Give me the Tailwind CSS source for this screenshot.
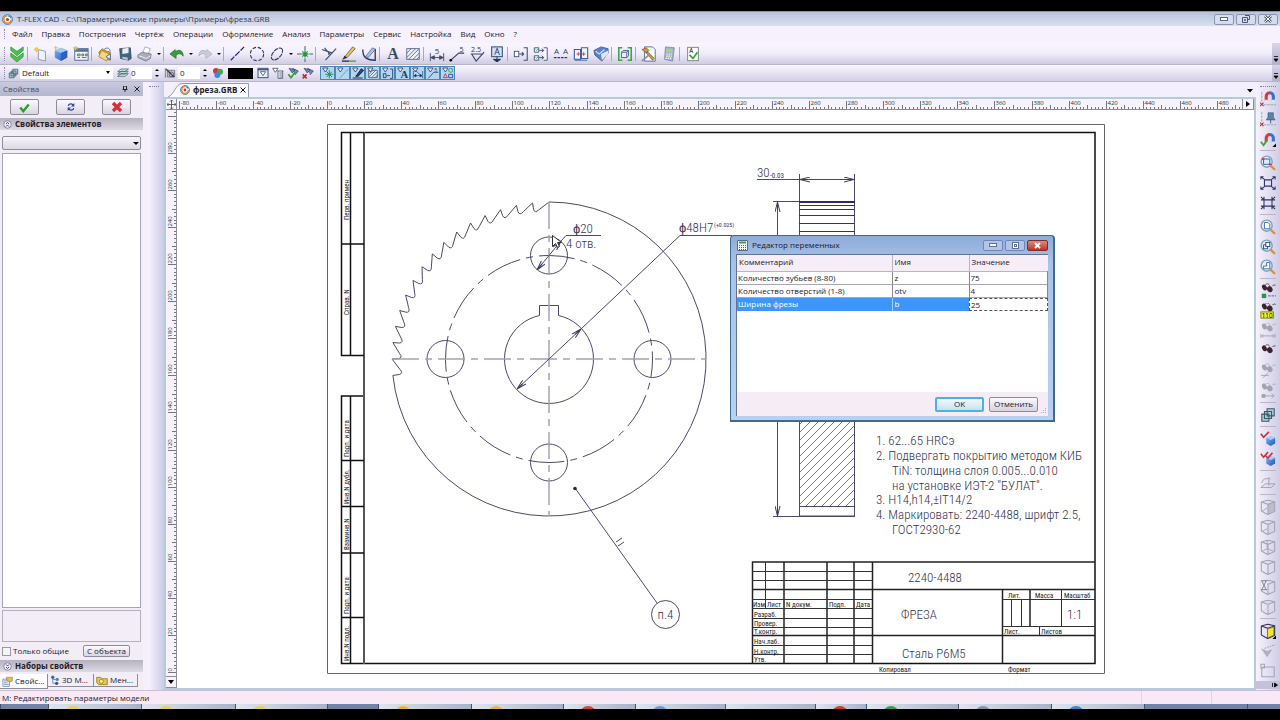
<!DOCTYPE html>
<html lang="ru">
<head>
  <meta charset="UTF-8">
  <meta name="viewport" content="width=device-width, initial-scale=1.0">
  <title>T-FLEX CAD</title>
  <script src="https://cdn.jsdelivr.net/npm/@tailwindcss/browser@4"></script>
</head>
<body class="bg-black h-screen flex flex-col overflow-hidden py-[11px] font-['Open_Sans','Noto_Sans',sans-serif] text-[8px] leading-3 text-[#1d1a2a]">

  <!-- gradients stay in a rendered svg, they do not paint from a hidden one -->
  <svg class="absolute size-0" aria-hidden="true">
    <defs>
      <linearGradient id="gb" x1="0" y1="0" x2="1" y2="1"><stop offset="0" stop-color="#7fb6f5"/><stop offset="1" stop-color="#1c50b8"/></linearGradient>
      <linearGradient id="gm" x1="0" x2="1"><stop offset=".45" stop-color="#d63a3a"/><stop offset=".55" stop-color="#3b6fc4"/></linearGradient>
    </defs>
  </svg>

  <!-- icon set -->
  <svg class="hidden" aria-hidden="true">
    <symbol id="logo" viewBox="0 0 18 18"><circle cx="9" cy="9" r="8" fill="#f4f8ff" stroke="#2f6ea8" stroke-width="1.5"/><path d="M9 3a6 6 0 1 0 6 6" fill="none" stroke="#e8882a" stroke-width="2.5"/><circle cx="9" cy="9" r="2.5" fill="#c43a22"/><path d="M10 3a6 6 0 0 1 5 4" stroke="#2f8fd0" stroke-width="2" fill="none"/></symbol>
    <symbol id="chev" viewBox="0 0 18 18"><path d="M2 1l7 5 7-5v4l-7 6-7-6zM2 8l7 5 7-5v4l-7 6-7-6z" fill="#4cc04c" stroke="#1f8a2a" stroke-width=".7"/></symbol>
    <symbol id="new" viewBox="0 0 18 18"><path d="M6 4l8 2v11l-8-2z" fill="#eef3fb" stroke="#8593ad"/><path d="M4 1v6M1 4h6M2 2l4 4M6 2L2 6" stroke="#f0c93a" stroke-width="1.2"/></symbol>
    <symbol id="cube" viewBox="0 0 18 18"><path d="M2 5l7-3 7 3v8l-7 4-7-4z" fill="url(#gb)"/><path d="M2 5l7 3 7-3-7-3z" fill="#9ccbfa"/><path d="M9 8v9l7-4V5z" fill="#2a5fc6"/><path d="M3 0v5M1 2h5" stroke="#f0c93a" stroke-width="1.3"/></symbol>
    <symbol id="win" viewBox="0 0 18 18"><rect x="2" y="3" width="15" height="13" fill="#f4f6fd" stroke="#4b5f85"/><path d="M2 5h15" stroke="#4b6fa8" stroke-width="3"/><path d="M5 9h3v2H5zM10 9h2v2h-2zM14 9h2v2h-2zM5 13h3M10 13h5" stroke="#506a50" fill="none"/><path d="M3 0v5M0 2h6" stroke="#f0c93a" stroke-width="1.5"/></symbol>
    <symbol id="open" viewBox="0 0 18 18"><path d="M2 7l4-4 3 2 6 2v9L4 13z" fill="#d9a233" stroke="#8d6513" stroke-width=".8"/><path d="M5 5l9 4-3 8-9-5z" fill="#f5d581" stroke="#a9791d" stroke-width=".8"/><path d="M8 4c3-3 6-2 7 2M10 12l5-3v6z" stroke="#3f6c9d" fill="#f2f5fa"/></symbol>
    <symbol id="save" viewBox="0 0 18 18"><path d="M3 3l12-1 1 12-3 2-9-2z" fill="#47647f" stroke="#2b3f55" stroke-width=".8"/><path d="M6 3l7-1v6l-7 1z" fill="#e6eef7"/><path d="M6 12l6 1v3l-6-2z" fill="#b6c7d8"/></symbol>
    <symbol id="print" viewBox="0 0 18 18"><path d="M6 9l3-8 6 2-3 7z" fill="#fff" stroke="#8f95a5" stroke-width=".8"/><path d="M1 10l5-3 10 2-1 5-5 3-9-4z" fill="#a9adb9" stroke="#666c7c" stroke-width=".8"/><path d="M2 11l9 3 4-3" stroke="#f1f3f8" fill="none"/></symbol>
    <symbol id="undo" viewBox="0 0 18 18"><path d="M1 9l7 5v-3.500c3-3 6-2 8 1 0-7-5-8-9-5L7 4z" fill="#3c9b3c" stroke="#1f6b26" stroke-width=".7"/></symbol>
    <symbol id="redo" viewBox="0 0 18 18"><path d="M17 9l-7 5v-3.500c-3-3-6-2-8 1 0-7 5-8 9-5L11 4z" fill="#c9cbd8" stroke="#a7a9ba" stroke-width=".7"/></symbol>
    <symbol id="line" viewBox="0 0 18 18"><path d="M2 16L6 12M7 11l5-5M13 5l4-4" stroke="#27276e" stroke-width="1.400"/></symbol>
    <symbol id="circ" viewBox="0 0 18 18"><circle cx="9" cy="9" r="7.500" fill="none" stroke="#33335e" stroke-width="1.200" stroke-dasharray="4 2"/></symbol>
    <symbol id="ell" viewBox="0 0 18 18"><ellipse cx="9" cy="9" rx="8" ry="4.500" transform="rotate(-48 9 9)" fill="none" stroke="#33335e" stroke-width="1.200" stroke-dasharray="5 1"/></symbol>
    <symbol id="node" viewBox="0 0 18 18"><path d="M9 0v18M0 9h18" stroke="#44446a" stroke-dasharray="5 2"/><path d="M9 5v8M5 9h8M6 6l6 6M12 6l-6 6" stroke="#1e9d33" stroke-width="1.300"/></symbol>
    <symbol id="trim" viewBox="0 0 18 18"><path d="M1 4l12 4M4 2l4 5M5 16L17 3" stroke="#39507c" stroke-width="1.300"/><path d="M8 6l3 3-3 1z" fill="#39507c"/></symbol>
    <symbol id="pen" viewBox="0 0 18 18"><path d="M2 15L13 1l3 2-9 10z" fill="#e7c459" stroke="#4a4a5a" stroke-width=".8"/><path d="M2 15l5-2-3-2z" fill="#222b4a"/><path d="M1 17h8" stroke="#222b4a" stroke-width="1.500"/><path d="M9 17h8" stroke="#3aa847" stroke-width="1.500"/></symbol>
    <symbol id="pen2" viewBox="0 0 18 18"><path d="M2 4c0 8 3 12 14 12V3" fill="none" stroke="#2b3566" stroke-width="1.500"/><path d="M5 12L13 2l3 2-8 9z" fill="#a8c4ea" stroke="#36588e" stroke-width=".8"/></symbol>
    <symbol id="txt" viewBox="0 0 18 18"><text x="9" y="15" font-size="18" text-anchor="middle" font-family="Liberation Serif, serif" font-weight="bold" fill="#3b4a66">A</text></symbol>
    <symbol id="hat" viewBox="0 0 18 18"><rect x="2" y="3" width="14" height="12" fill="#eef2fa" stroke="#56657f"/><path d="M2 8l5-5M2 13l10-10M4 15L16 3M9 15l7-7M13 15l3-3" stroke="#56657f"/></symbol>
    <symbol id="dim" viewBox="0 0 18 18"><path d="M1.500 8v9M16.500 8v9M2 13h14M2 13l4-2v4zM16 13l-4-2v4z" stroke="#3d4a68" fill="#3d4a68"/><text x="9" y="9" font-size="9" text-anchor="middle" fill="#2c3853">5</text></symbol>
    <symbol id="lead" viewBox="0 0 18 18"><path d="M2 16L11 8h6" stroke="#333f5e" fill="none" stroke-width="1.200"/><circle cx="2" cy="16" r="1.500"/><text x="14" y="7" font-size="8" text-anchor="middle" fill="#2c3853">5</text></symbol>
    <symbol id="rough" viewBox="0 0 18 18"><path d="M2 9h14M3 9l5 8 9-10" stroke="#3d4a68" fill="none" stroke-width="1.300"/><text x="8" y="7" font-size="8" text-anchor="middle" fill="#2c3853">2.5</text></symbol>
    <symbol id="scr" viewBox="0 0 18 18"><rect x="3" y="1" width="12" height="11" fill="#cfe3f6" stroke="#35507c" stroke-width="1.200"/><text x="9" y="10" font-size="10" text-anchor="middle" fill="#1f2e54">A</text><path d="M9 12v3M5 15h8l-4 3z" fill="#1f2e54" stroke="#1f2e54"/></symbol>
    <symbol id="frag" viewBox="0 0 18 18"><rect x="1.500" y="6" width="5" height="6" fill="#fff" stroke="#43506e"/><path d="M7 9h5M10 7l2 2-2 2M12 2h4v14h-4" fill="none" stroke="#43506e" stroke-width="1.200"/></symbol>
    <symbol id="frag2" viewBox="0 0 18 18"><path d="M1.500 2h5v5h-5zM1.500 11h5v5h-5zM7 5h5M7 13h5M12 2h4v14h-4" fill="#f6f8fd" stroke="#43506e"/><path d="M3 4l1 1 2-2M3 13l1 1 2-2" stroke="#2d9a3a" fill="none"/><path d="M10 3l2 2-2 2M10 11l2 2-2 2" fill="none" stroke="#27314f"/></symbol>
    <symbol id="aa" viewBox="0 0 18 18"><text x="4" y="9" font-size="9" text-anchor="middle" fill="#33405e">A</text><text x="14" y="9" font-size="9" text-anchor="middle" fill="#33405e">A</text><path d="M1 13h16" stroke="#33405e" stroke-width="1.500" stroke-dasharray="3 1"/></symbol>
    <symbol id="link" viewBox="0 0 18 18"><path d="M1.500 4h7v11h-7zM9.500 2h7v12h-7z" fill="#eef4fd" stroke="#3c5f9c" stroke-width="1.200"/><path d="M4 9h10M6 7v4M12 7v4" stroke="#c23a4a"/><path d="M2 16h14" stroke="#3c5f9c"/></symbol>
    <symbol id="lib" viewBox="0 0 18 18"><path d="M1 5l8-4 8 2v5l-7 9-8-7z" fill="#5b82c4" stroke="#2d4a86" stroke-width=".8"/><path d="M9 9l8-4v4l-7 7z" fill="#dfe5f0"/><path d="M3 6l4 3 6-5" stroke="#c9dcf6" fill="none" stroke-width="1.500"/></symbol>
    <symbol id="brk" viewBox="0 0 18 18"><path d="M6 2H2v14h4M12 2h4v14h-4" fill="none" stroke="#39a846" stroke-width="1.800"/><path d="M5 7l2-2h6v6l-2 2H5zM5 7h6v6M11 7l2-2" fill="#e7edf7" stroke="#46587c"/></symbol>
    <symbol id="ham" viewBox="0 0 18 18"><path d="M4 1h9l3 3v13H4z" fill="#fafbff" stroke="#53648a"/><path d="M1 4l5-2 3 3-3 3zM7 6l8 8-2 2-7-8z" fill="#c89a3f" stroke="#6b5120" stroke-width=".7"/><path d="M1 17l8-7" stroke="#8893a8" stroke-width="2"/></symbol>
    <symbol id="calc" viewBox="0 0 18 18"><path d="M5 1l10 1-2 15-9-2z" fill="#a3b5c9" stroke="#6d7f97" stroke-width=".8"/><path d="M6 3l7 1v3l-7-1z" fill="#9edb6f"/><path d="M6 9h7M6 11.500h6M5 14h7" stroke="#f6f8fc" stroke-width="1.400" stroke-dasharray="1.500 1"/></symbol>
    <symbol id="spell" viewBox="0 0 18 18"><rect x="3" y="1.500" width="12" height="15" fill="#fff" stroke="#6e7f78"/><path d="M5 10l4 4 5-7" stroke="#3da33d" stroke-width="2" fill="none"/><text x="7" y="8" font-size="7" text-anchor="middle">A</text></symbol>
    <symbol id="stack" viewBox="0 0 18 18"><path d="M8 2h8v8H8zM5 5h8v8H5zM2 8h8v8H2z" fill="#a9cbd4" stroke="#39596a" stroke-width="1.200"/></symbol>
    <symbol id="lay" viewBox="0 0 18 18"><path d="M1 14h11l5-4H6zM1 10.500h11l5-4H6zM1 7h11l5-4H6z" fill="#cfe6ea" stroke="#2f5560"/></symbol>
    <symbol id="prio" viewBox="0 0 18 18"><path d="M2 2v14M5 5h11v10H5z" stroke="#4a4f66" fill="#c9cede"/><path d="M3 3l12 12" stroke="#5a3a2a" stroke-width="2"/><circle cx="11" cy="11" r="3.500" fill="none" stroke="#2b3050"/></symbol>
    <symbol id="rgb" viewBox="0 0 18 18"><circle cx="6" cy="6" r="4.500" fill="#d8362e"/><circle cx="12" cy="7" r="4.500" fill="#3fae49"/><circle cx="8" cy="12" r="4.500" fill="#3f86d8"/></symbol>
    <symbol id="flt" viewBox="0 0 18 18"><rect x="1.500" y="2" width="15" height="14" fill="#e8eefb" stroke="#3f5280" stroke-width="1.500"/><path d="M1 4h16" stroke="#3f5280" stroke-width="2"/><path d="M5 7h8l-4 6z" fill="#fff" stroke="#3f4a66" stroke-width="1.200"/></symbol>
    <symbol id="flt2" viewBox="0 0 18 18"><path d="M1 2h8L5 8zM8 6h9M9 6v11h7V6M11 9h4M11 12h4M11 15h4" fill="#fff" stroke="#3f4a66" stroke-width="1.200"/></symbol>
    <symbol id="fok" viewBox="0 0 18 18"><path d="M3 2l9 2-4 5zM8 2l9 4-5 6" fill="#6d86b4" stroke="#2f406a"/><path d="M2 11l4 5 6-8" stroke="#2d9c37" stroke-width="2.500" fill="none"/></symbol>
    <symbol id="fno" viewBox="0 0 18 18"><path d="M3 2l9 2-4 5zM8 2l9 4-5 6" fill="#6d86b4" stroke="#2f406a"/><path d="M1 11l6 6M7 11l-6 6" stroke="#c92626" stroke-width="2.500"/></symbol>
    <symbol id="fun" viewBox="0 0 18 18"><path d="M1 1.500h8l-4 6z" fill="#eef6ff" stroke="#27375f" stroke-width="1.200"/></symbol>
    <symbol id="t0" viewBox="0 0 18 18"><use href="#fun"/><path d="M11 5v12M5 11h12M7 7l8 8M15 7l-8 8" stroke="#23963a" stroke-width="1.500"/></symbol>
    <symbol id="t1" viewBox="0 0 18 18"><use href="#fun"/><path d="M4 17L17 3" stroke="#6480b0"/></symbol>
    <symbol id="t2" viewBox="0 0 18 18"><use href="#fun"/><path d="M6 14L14 3l3 2-8 9zM1 16.500h15" stroke="#1c2a52" stroke-width="1.600" fill="#41527e"/></symbol>
    <symbol id="t3" viewBox="0 0 18 18"><path d="M2.500 5h13v11h-13zM3 11l6-6M3 15l10-10M7 16l8-8M12 16l4-4" fill="#dcebf8" stroke="#2f4068"/><use href="#fun"/></symbol>
    <symbol id="t4" viewBox="0 0 18 18"><use href="#fun"/><path d="M2 10h4v6H2zM7 13h5M12 3h4v14h-4" fill="none" stroke="#27375f" stroke-width="1.300"/></symbol>
    <symbol id="t5" viewBox="0 0 18 18"><use href="#fun"/><text x="11" y="17" font-size="16" text-anchor="middle" font-family="Liberation Serif, serif" font-weight="bold" fill="#27375f">A</text></symbol>
    <symbol id="t6" viewBox="0 0 18 18"><use href="#fun"/><path d="M2 6v11M16 6v11M3 13h12M5 5l9 8M3 13l3-2v4zM15 13l-3-2v4z" stroke="#27375f" fill="#27375f"/></symbol>
    <symbol id="t7" viewBox="0 0 18 18"><use href="#fun"/><path d="M2 17l8-9h7" stroke="#27375f" fill="none" stroke-width="1.200"/><text x="13" y="8" font-size="8" text-anchor="middle" fill="#27375f">5</text></symbol>
    <symbol id="t8" viewBox="0 0 18 18"><use href="#fun"/><path d="M2 16l3-6 3 6z" fill="none" stroke="#c8323c" stroke-width="1.300"/><circle cx="13" cy="5" r="3" fill="none" stroke="#2a9a49" stroke-width="1.300"/><path d="M10 11h6v5h-6z" fill="none" stroke="#2445a8" stroke-width="1.300"/></symbol>
    <symbol id="mag" viewBox="0 0 18 18"><path d="M6 13V8a4 4 0 0 1 8 0v5" fill="none" stroke="url(#gm)" stroke-width="3.500"/><path d="M4.300 13h3.500M12.300 13h3.500" stroke="#dfe3ee" stroke-width="2.500"/></symbol>
    <symbol id="r0" viewBox="0 0 18 18"><path d="M2 1v12M4 15.500h14" stroke="#9a9cab" stroke-dasharray="3 1"/><use href="#mag" x="1" y="-2" width="18" height="18"/><path d="M0 13l4 4M4 13l-4 4" stroke="#c92b2b" stroke-width="1.200"/></symbol>
    <symbol id="r1" viewBox="0 0 18 18"><path d="M2 1v12M4 15.500h14" stroke="#9a9cab" stroke-dasharray="3 1"/><path d="M9 2h6v5l2 3H7l2-3z" fill="#5c83a8" stroke="#35587a" stroke-width=".7"/><path d="M12 10v4" stroke="#44546a"/><path d="M0 13l4 4M4 13l-4 4" stroke="#c92b2b" stroke-width="1.200"/></symbol>
    <symbol id="r2" viewBox="0 0 18 18"><use href="#mag" x="1" y="0" width="18" height="18"/><path d="M1 12l3 4 4-6" stroke="#3aa63a" stroke-width="2" fill="none"/><path d="M18 14v4h-4z"/></symbol>
    <symbol id="glass" viewBox="0 0 18 18"><path d="M11 11l5 5" stroke="#d9924c" stroke-width="2.800" stroke-linecap="round"/><circle cx="7.500" cy="7.500" r="6.200" fill="#dcecf9" stroke="#7d9fc4" stroke-width="1.600"/></symbol>
    <symbol id="z0" viewBox="0 0 18 18"><use href="#glass"/><path d="M4 4.500h7v6H4z" fill="none" stroke="#35558c"/><path d="M2 4.500h3M10 10.500h3" stroke="#c9303a" stroke-width="1.500"/></symbol>
    <symbol id="z1" viewBox="0 0 18 18"><path d="M5 5.500h8v7H5zM1 2l4 3M17 2l-4 3M1 16l4-3M17 16l-4-3M1 5V2h3M14 2h3v3M1 13v3h3M14 16h3v-3" fill="none" stroke="#2f3566" stroke-width="1.200"/></symbol>
    <symbol id="z2" viewBox="0 0 18 18"><path d="M1 5.500h16M1 12.500h16M4.500 2v14M13.500 2v14M1 2l3 3M17 2l-3 3M1 16l3-3M17 16l-3-3" fill="none" stroke="#2f3566" stroke-width="1.200"/></symbol>
    <symbol id="z3" viewBox="0 0 18 18"><use href="#glass"/><path d="M5 4h4l2 2v5H5z" fill="#fff" stroke="#3d6a92"/></symbol>
    <symbol id="z4" viewBox="0 0 18 18"><use href="#glass"/><path d="M6.500 4h4.500v4.500H6.500zM4 6.500h2.500M4 6.500v4.500h4.500V9" fill="#fff" stroke="#3d5a82" stroke-width="1.200"/></symbol>
    <symbol id="z5" viewBox="0 0 18 18"><use href="#glass"/><path d="M7.500 4v4H4v3h7V4z" fill="#fff" stroke="#3d6a92"/></symbol>
    <symbol id="eye" viewBox="0 0 18 18"><ellipse cx="5" cy="6" rx="2.500" ry="3.500" transform="rotate(-30 5 6)" fill="currentColor"/><ellipse cx="11" cy="8" rx="3" ry="3.500" transform="rotate(-30 11 8)" fill="currentColor"/><path d="M6 3c2-2 4-1 5 1M14 4l3-1 1 1" stroke="currentColor" fill="none" stroke-width=".8"/></symbol>
    <symbol id="e0" viewBox="0 0 18 18"><use href="#eye" y="-1"/><rect x="2" y="12" width="5" height="5" fill="#2b9440"/><path d="M9 14.500h9" stroke="#4b5a80" stroke-dasharray="3 1"/></symbol>
    <symbol id="e1" viewBox="0 0 18 18"><use href="#eye" y="-2"/><rect x="1" y="10" width="14" height="7" fill="#f5f032" stroke="#77741c"/><text x="8" y="16.500" font-size="7" text-anchor="middle">110</text></symbol>
    <symbol id="e2" viewBox="0 0 18 18"><use href="#eye" y="-2"/><path d="M1 12v5M17 12v5M2 14.500h14M4 13l-2 1.500 2 1.500M14 13l2 1.500-2 1.500" stroke="currentColor" fill="none"/></symbol>
    <symbol id="e4" viewBox="0 0 18 18"><use href="#eye" y="-1"/><path d="M1 14h9M3 17l6-6" stroke="currentColor"/></symbol>
    <symbol id="e5" viewBox="0 0 18 18"><use href="#eye" y="-2"/><circle cx="4" cy="14.500" r="2.500" fill="currentColor"/><path d="M5 14.500h11M13 12l3 2.500-3 2.500" stroke="currentColor" fill="none"/></symbol>
    <symbol id="bx" viewBox="0 0 18 18"><path d="M7 8l5-2 5 2v6l-5 3-5-3z" fill="url(#gb)"/><path d="M7 8l5 2 5-2-5-2z" fill="#a5cdfb"/></symbol>
    <symbol id="c0" viewBox="0 0 18 18"><use href="#bx"/><path d="M1 3l3 4 6-6" stroke="#cf2f3a" stroke-width="1.800" fill="none"/></symbol>
    <symbol id="c1" viewBox="0 0 18 18"><use href="#bx"/><path d="M1 3l3 4 5-6M6 5l3 3 5-6" stroke="#cf2f3a" stroke-width="1.800" fill="none"/></symbol>
    <symbol id="pl" viewBox="0 0 18 18"><path d="M1 14l5-4h11l-4 4zM10 3v9M8 5l2-2 2 2M2 9c1-4 3-5 6-5" fill="none" stroke="#9b9cab"/></symbol>
    <symbol id="wire" viewBox="0 0 18 18"><path d="M1.500 3.500l7-2 8 1.500v11l-8 3.500-7-4zM1.500 3.500L9 6l7.500-3M9 6v11.500" fill="none" stroke="currentColor" stroke-width="1.200"/></symbol>
    <symbol id="w0" viewBox="0 0 18 18"><path d="M9 6l7.500-3v11L9 17.500z" fill="#bcbdcb"/><use href="#wire"/><path d="M2 14l6-4" stroke="currentColor"/></symbol>
    <symbol id="w1" viewBox="0 0 18 18"><path d="M9 6l7.500-3v11L9 17.500z" fill="#d5d6e2"/><use href="#wire"/><path d="M2 14l6-3" stroke="currentColor"/></symbol>
    <symbol id="w2" viewBox="0 0 18 18"><use href="#wire"/><path d="M8 2v9L2 14M8 11l8 3" stroke="currentColor" fill="none"/></symbol>
    <symbol id="w4" viewBox="0 0 18 18"><use href="#wire"/><path d="M1 2h7v10H1z" fill="#ece9f8"/><path d="M1 2h7M1 12h7M2 2l5 10M7 2L2 12" stroke="#77788a"/></symbol>
    <symbol id="w5" viewBox="0 0 18 18"><use href="#wire"/><path d="M8 2v9L2 14M8 11l8 3" stroke="#cfd0dc" fill="none"/></symbol>
    <symbol id="wy" viewBox="0 0 18 18"><use href="#wire"/><path d="M8.500 6.500l7-2v9l-7 3.500z" fill="#f6e52a" stroke="#4a4710" stroke-width=".6"/><path d="M18 14v4h-4z"/></symbol>
    <symbol id="tri" viewBox="0 0 18 18"><path d="M1 6l7 10 6-9-6 2z" fill="#aeb0bf"/><path d="M5 6l12-4" stroke="#9b9cab" stroke-dasharray="2 1"/></symbol>
    <symbol id="pg" viewBox="0 0 18 18"><path d="M3 4.500h13v11H2V6M1 1.500h4v4H1z" fill="none" stroke="#a3a4b6" stroke-width="1.200"/></symbol>
    <symbol id="ok" viewBox="0 0 18 18"><path d="M2 9l5 6 9-11" stroke="#2f9e2f" stroke-width="4" fill="none"/></symbol>
    <symbol id="rf" viewBox="0 0 18 18"><path d="M4 7c1-4 7-5 9-1M14 11c-1 4-7 5-9 1" stroke="#2b3fa8" stroke-width="2.200" fill="none"/><path d="M15 2v6H9zM3 16v-6h6z" fill="#2b3fa8"/></symbol>
    <symbol id="no" viewBox="0 0 18 18"><path d="M3 3l12 12M15 3L3 15" stroke="#d6303a" stroke-width="5"/></symbol>
    <symbol id="dbl" viewBox="0 0 18 18"><circle cx="9" cy="9" r="7.500" fill="#eeedf8" stroke="#6f6f90" stroke-width="1.500"/><path d="M6 8l3-3 3 3M6 13l3-3 3 3" fill="none" stroke="#2f3070" stroke-width="1.800"/></symbol>
    <symbol id="tab1" viewBox="0 0 18 18"><rect x="1.500" y="5" width="11" height="12" fill="#eef3fb" stroke="#4d6ea0"/><path d="M3 8h8M3 11h6M3 14h8" stroke="#4d6ea0"/><path d="M7 2h10v6l-5 2-4-3z" fill="#e0b85a" stroke="#8d6c1f" stroke-width=".8"/></symbol>
    <symbol id="tab2" viewBox="0 0 18 18"><path d="M5 4v11h6M5 8h6" stroke="#3a4a70" fill="none"/><circle cx="5" cy="4" r="3" fill="#3f6c9c"/><circle cx="13" cy="8" r="3" fill="#4f86ba"/><circle cx="12" cy="15" r="3" fill="#31567f"/></symbol>
    <symbol id="tab3" viewBox="0 0 18 18"><path d="M1 5h6l2 2h8v9H4L1 13z" fill="#e6c547" stroke="#836a15"/><circle cx="8" cy="11" r="3" fill="#f6ecb0" stroke="#836a15"/></symbol>
  </svg>

  <!-- title bar -->
  <header class="h-[15px] shrink-0 flex items-center gap-1 px-0.5 bg-linear-to-b from-[#b7c3dc] to-[#dadff0] border-t border-[#8b93a8]">
    <svg class="size-[11px]"><use href="#logo"/></svg>
    <h1 class="flex-1 text-[#2f3a50]">T-FLEX CAD - C:\Параметрические примеры\Примеры\фреза.GRB</h1>
    <div class="flex gap-0.5">
      <button aria-label="Свернуть" class="w-5 h-[11px] grid place-items-center border border-[#8a95b3] rounded-xs bg-[#d5dcee]"><span class="w-2 h-1 border border-[#5b6682] bg-white"></span></button>
      <button aria-label="Восстановить" class="w-5 h-[11px] grid place-items-center border border-[#8a95b3] rounded-xs bg-[#d5dcee]"><svg class="size-2" viewBox="0 0 8 8"><path d="M3 .5h4.500v4H5.500M.5 2.500h5v5h-5z M2.500 4.500h1v1h-1z" fill="none" stroke="#4c5672"/></svg></button>
      <button aria-label="Закрыть" class="w-5 h-[11px] grid place-items-center border border-[#8a95b3] rounded-xs bg-[#d5dcee]"><svg class="size-2" viewBox="0 0 8 8"><path d="M1 1l6 6M7 1L1 7" stroke="#4c5672" stroke-width="2.500"/><path d="M1 1l6 6M7 1L1 7" stroke="#fff"/></svg></button>
    </div>
  </header>

  <!-- menu -->
  <nav class="h-[17px] shrink-0 flex items-center gap-[9px] pl-1 pb-px bg-[#f7f1fd]">
    <span class="h-2.5 border-l border-dotted border-[#8c8ba5]"></span>
    <a href="#" class="-ml-0.5">Файл</a><a href="#">Правка</a><a href="#">Построения</a><a href="#">Чертёж</a><a href="#">Операции</a><a href="#">Оформление</a><a href="#">Анализ</a><a href="#">Параметры</a><a href="#">Сервис</a><a href="#">Настройка</a><a href="#">Вид</a><a href="#">Окно</a><a href="#">?</a>
  </nav>

  <!-- main toolbar -->
  <div class="h-[22px] shrink-0 flex bg-linear-to-b from-[#faf6ff] via-[#f0ecfa] to-[#d0cce2] border-b border-[#b9b5cd]">
    <div class="flex-1 flex items-center pl-1">
      <span class="h-3.5 w-[3px] border-l border-dotted border-[#8c8ba5]"></span>
      <div id="main-bar" class="flex items-center"></div>
    </div>
    <button aria-label="Ещё" class="w-2 flex items-end justify-center pb-0.5 bg-linear-to-b from-[#d8d4ea] to-[#b5b1cc]"><svg class="w-1.5 h-1.5" viewBox="0 0 6 6"><path d="M1 .5h4M1 3h4L3 5.500z" stroke="#000" stroke-width=".8"/></svg></button>
  </div>

  <!-- properties toolbar -->
  <div class="h-[17px] shrink-0 flex bg-linear-to-b from-[#faf6ff] to-[#d4d0e6] border-b border-[#b9b5cd]">
    <div class="flex-1 flex items-center pl-1">
      <span class="h-3 w-[3px] border-l border-dotted border-[#8c8ba5]"></span>
      <svg class="size-[11px] mx-px"><use href="#stack"/></svg>
      <div class="relative h-3 w-[93px]">
        <select aria-label="Слой" class="appearance-none w-full h-3 pl-0.5 bg-white leading-3"><option>Default</option></select>
        <svg class="absolute right-0.5 top-1 w-1.5 h-1 pointer-events-none" viewBox="0 0 6 4"><path d="M1 0h4L3 3z"/></svg>
      </div>
      <svg class="size-3 ml-1 mr-0.5"><use href="#lay"/></svg>
      <input aria-label="Уровень" value="0" class="w-[21px] h-3 bg-white">
      <svg class="w-1.5 h-3 mx-0.5" viewBox="0 0 6 12"><path d="M1 4h4L3 2zM1 8h4l-2 2z"/></svg>
      <svg class="size-3 mx-0.5"><use href="#prio"/></svg>
      <input aria-label="Приоритет" value="0" class="w-[22px] h-3 bg-white pl-0.5">
      <svg class="w-1.5 h-3 ml-0.5 mr-1" viewBox="0 0 6 12"><path d="M1 4h4L3 2zM1 8h4l-2 2z"/></svg>
      <svg class="size-3 mr-1"><use href="#rgb"/></svg>
      <button aria-label="Цвет" class="w-[25px] h-[11px] bg-black"></button>
      <div id="filter-bar" class="flex items-center gap-[3px] pl-1 pr-1.5"></div>
      <div id="toggle-bar" class="flex"></div>
    </div>
    <button aria-label="Ещё" class="w-2 flex items-end justify-center pb-0.5 bg-linear-to-b from-[#d8d4ea] to-[#b5b1cc]"><svg class="w-1.5 h-1.5" viewBox="0 0 6 6"><path d="M1 .5h4M1 3h4L3 5.500z" stroke="#000" stroke-width=".8"/></svg></button>
  </div>

  <div class="flex-1 min-h-0 flex bg-[#f4effc]">

    <!-- properties panel -->
    <aside class="w-[143px] shrink-0 flex flex-col bg-[#f3edf7] pb-px">
      <div class="h-3.5 flex items-center px-[3px] bg-linear-to-b from-[#c9c9de] to-[#b4b5d0] text-[#4c4f68]">
        <h2 class="flex-1">Свойства</h2>
        <button aria-label="Закрепить" class="mr-1.5"><svg class="size-1.5" viewBox="0 0 6 6"><path d="M1.500 0h3v3.500h-3zM.5 3.500h5M3 3.500V6" fill="none" stroke="#222"/></svg></button>
        <button aria-label="Закрыть панель"><svg class="size-1.5" viewBox="0 0 6 6"><path d="M.5.5l5 5M5.500.5l-5 5" stroke="#222"/></svg></button>
      </div>
      <div class="flex gap-[17px] pl-2.5 py-[3px]">
        <button aria-label="Применить" class="w-[29px] h-4 grid place-items-center border border-[#8d8a9c] rounded-xs bg-linear-to-b from-[#fbf9fe] to-[#d9d6e3]"><svg class="size-[11px]"><use href="#ok"/></svg></button>
        <button aria-label="Обновить" class="w-[29px] h-4 grid place-items-center border border-[#8d8a9c] rounded-xs bg-linear-to-b from-[#fbf9fe] to-[#d9d6e3]"><svg class="size-[10px]"><use href="#rf"/></svg></button>
        <button aria-label="Отменить ввод" class="w-[29px] h-4 grid place-items-center border border-[#8d8a9c] rounded-xs bg-linear-to-b from-[#fbf9fe] to-[#d9d6e3]"><svg class="size-3"><use href="#no"/></svg></button>
      </div>
      <h3 class="h-3 flex items-center gap-[3px] pl-[3px] font-bold bg-linear-to-b from-[#b5b2bd] to-[#dedae5]"><svg class="size-[9px]"><use href="#dbl"/></svg>Свойства элементов</h3>
      <div class="relative mx-0.5 mt-1.5">
        <select aria-label="Элемент" class="appearance-none block w-full h-[14px] border border-[#8e8b9b] rounded-xs bg-linear-to-b from-[#f8f5fb] to-[#dcd8e4]"><option></option></select>
        <svg class="absolute right-0.5 top-[6px] w-1.5 h-1 pointer-events-none" viewBox="0 0 6 4"><path d="M0 0h6L3 3z"/></svg>
      </div>
      <div class="flex-1 mx-0.5 mt-[3px] bg-white border border-[#a7a5b3]"></div>
      <div class="h-8 mx-0.5 mt-0.5 border border-[#b3b0bf]"></div>
      <div class="flex items-center h-4 px-0.5 mt-px">
        <input type="checkbox" id="common" class="appearance-none size-[9px] border border-[#9a98a8] bg-[#f6f3fa]">
        <label for="common" class="ml-0.5 w-[70px] whitespace-nowrap">Только общие</label>
        <button class="w-[47px] h-3 leading-2 border border-[#8d8a9c] rounded-xs bg-linear-to-b from-[#fbf9fe] to-[#d9d6e3]">С объекта</button>
      </div>
      <h3 class="mt-px h-3 flex items-center gap-[3px] pl-[3px] font-bold bg-linear-to-b from-[#b5b2bd] to-[#dedae5]"><svg class="size-[9px] rotate-180"><use href="#dbl"/></svg>Наборы свойств</h3>
      <div class="flex h-[15px] mt-0.5">
        <button class="w-12 flex items-center gap-0.5 pl-0.5 bg-white border-r border-b border-[#8e8b9b] whitespace-nowrap"><svg class="size-[11px]"><use href="#tab1"/></svg>Свойс...</button>
        <button class="w-[46px] h-[13px] flex items-center gap-0.5 pl-0.5 border-r border-b border-[#8e8b9b] whitespace-nowrap"><svg class="size-[10px]"><use href="#tab2"/></svg>3D М...</button>
        <button class="w-11 h-[13px] flex items-center gap-0.5 pl-0.5 border-r border-b border-[#8e8b9b] whitespace-nowrap"><svg class="size-3"><use href="#tab3"/></svg>Мен...</button>
      </div>
    </aside>

    <!-- docked side strip -->
    <div class="w-[21px] shrink-0 pl-1.5 bg-linear-to-r from-[#f6f0fc] from-30% to-[#c9cbe6]"><div class="mt-1 w-2.5 border-t border-dotted border-[#7f7d99]"></div></div>

    <!-- document -->
    <main class="relative flex-1 min-w-0 flex flex-col">
      <div class="h-[15px] flex items-end pl-1 pr-[3px]">
        <div class="relative h-3.5 w-[82px]">
          <svg class="absolute inset-0 w-full h-full" viewBox="0 0 82 14"><path d="M0 14C6 12 8 .5 14 .5h66.500V14" fill="#fdfbff" stroke="#8c9cb8"/></svg>
          <div class="relative flex items-center h-full pl-3 gap-[3px]">
            <svg class="size-[10px]"><use href="#logo"/></svg><span class="font-bold">фреза.GRB</span>
            <button aria-label="Закрыть вкладку"><svg class="size-1.5" viewBox="0 0 6 6"><path d="M.5.5l5 5M5.500.5l-5 5" stroke="#111"/></svg></button>
          </div>
        </div>
        <svg class="ml-auto mb-1 w-1.5 h-1" viewBox="0 0 6 4"><path d="M0 0h6L3 3.500z"/></svg>
      </div>
      <div class="flex-1 min-h-0 flex flex-col border-2 border-[#b4cbdc] bg-white">
        <div class="h-[11px] shrink-0 flex bg-[#f6f3fa] border-b border-[#8d8b98]">
          <div class="w-[11px] grid place-items-center border-r border-[#8d8b98]"><svg class="size-[9px]" viewBox="0 0 9 9"><path d="M4.500 0v9M0 4.500h9M3 1.500L4.500 0 6 1.500M3 7.500L4.500 9 6 7.500M1.500 3L0 4.500 1.500 6M7.500 3L9 4.500 7.500 6" fill="none" stroke="#444" stroke-width=".8"/></svg></div>
          <svg id="h-ruler" class="flex-1 h-2.5"></svg>
          <button aria-label="Вправо" class="w-3 grid place-items-center border-x border-[#8d8b98]"><svg class="w-1 h-1.5" viewBox="0 0 4 6"><path d="M0 0v6l4-3z"/></svg></button>
        </div>
        <div class="flex-1 min-h-0 flex">
          <div class="w-[11px] shrink-0 flex flex-col bg-[#f6f3fa] border-r border-[#8d8b98]">
            <svg id="v-ruler" class="w-2.5 flex-1"></svg>
            <button aria-label="Вниз" class="h-3 grid place-items-center border-y border-[#8d8b98]"><svg class="w-1.5 h-1" viewBox="0 0 6 4"><path d="M0 0h6L3 4z"/></svg></button>
          </div>

          <svg class="flex-1 font-['Roboto_Condensed',Roboto,sans-serif]" role="img" aria-label="Чертёж фрезы">
            <defs>
              <pattern id="hatch" width="8" height="8" patternUnits="userSpaceOnUse"><path d="M-1 9L9-1M-1 1L1-1M7 9l2-2" stroke="#55557a" stroke-width=".8"/></pattern>
              <marker id="arr" viewBox="0 0 10 6" refX="10" refY="3" markerWidth="10" markerHeight="6" orient="auto-start-reverse" markerUnits="userSpaceOnUse"><path d="M0 .5L10 3 0 5.500M2 3h8" fill="none" stroke="#3a3a66"/></marker>
            </defs>
            <g transform="translate(-177 -110)" fill="none">
              <!-- sheet and frame -->
              <path d="M327.500 124.500h777v549h-777z" stroke="#666"/>
              <path d="M364 132.500h731v531H341.500V396H364" stroke="#111" stroke-width="1.500"/>
              <path d="M364 132v532" stroke="#555" stroke-width="2"/>
              <path d="M364 132.500h-22.500V355.500H364M350.500 132v223M341 244h23M350.500 396v267M341 460.500h23M341 506.500h23M341 553h23M341 617.500h23" stroke="#111" stroke-width="1.500"/>
              <g fill="#222" font-size="7">
                <text transform="translate(349 220) rotate(-90)">Перв. примен</text>
                <text transform="translate(349 315) rotate(-90)">Справ. N</text>
                <text transform="translate(349 457) rotate(-90)">Подп. и дата</text>
                <text transform="translate(349 504) rotate(-90)">Инв.N дубл.</text>
                <text transform="translate(349 550) rotate(-90)">Взаминв.N</text>
                <text transform="translate(349 614) rotate(-90)">Подп. и дата</text>
                <text transform="translate(349 661) rotate(-90)">Инв.N подл.</text>
              </g>

              <!-- cutter, front view -->
              <g stroke="#4a4a66">
                <path id="teeth"/>
                <circle cx="549" cy="359" r="103.500" stroke-dasharray="36 6 7 6" stroke-dashoffset="18"/>
                <circle cx="549" cy="255.500" r="18.500"/><circle cx="549" cy="462.500" r="18.500"/>
                <circle cx="445.500" cy="359" r="18.500"/><circle cx="652.500" cy="359" r="18.500"/>
                <path d="M539.500 315.500A44.500 44.500 0 1 0 558.500 315.500V305.500h-19z"/>
              </g>
              <path d="M549 202v314" stroke="#a3a2b5" stroke-width="1.500" stroke-dasharray="27 6 7 6"/>
              <path d="M392 359h314" stroke="#a3a2b5" stroke-width="1.500" stroke-dasharray="27 6 7 6"/>
              <g stroke="#4a4a6c">
                <path d="M537 270l24-29" marker-start="url(#arr)" marker-end="url(#arr)"/><path d="M561 241l5-5.500h35"/>
                <path d="M517 389l64-60" marker-start="url(#arr)" marker-end="url(#arr)"/><path d="M581 329l99-93.500h52"/>
                <path d="M575 488l82 115M616 542l6-4M618 546l6-4"/>
                <circle cx="665.500" cy="614.500" r="14"/>
              </g>
              <circle cx="575" cy="488.500" r="1.800" fill="#26264f"/>

              <!-- cutter, side view -->
              <g stroke="#4a4a6c">
                <path d="M799.500 174v342h55V174M773 516.500h82"/>
                <path d="M773 201.500h27"/><path d="M799 202h56" stroke="#2c2c6a" stroke-width="2"/>
                <path d="M799 205.500h56M799 209.500h56M799 215.500h56M799 223.500h56M799 231.500h56" stroke="#34346c"/>
                <path d="M799.500 400h55v106.500h-55z" fill="url(#hatch)"/>
                <path d="M757 179.500h43"/><path d="M800 179.500h54" marker-start="url(#arr)" marker-end="url(#arr)"/>
                <path d="M777.500 202v314" marker-start="url(#arr)" marker-end="url(#arr)"/>
              </g>

              <g fill="#33334f" font-size="13" font-weight="300">
                <text x="757" y="177">30</text><text x="770" y="178" font-size="7" font-weight="400">-0.03</text>
                <text x="573" y="233">ϕ20</text><text x="566" y="248">4 отв.</text>
                <text x="679" y="232">ϕ48H7</text><text x="714" y="227" font-size="6" font-weight="400">(+0.025)</text>
                <text x="665.500" y="619" text-anchor="middle">п.4</text>
                <text x="876" y="445">1. 62...65 HRCэ</text>
                <text x="876" y="460">2. Подвергать покрытию методом КИБ</text>
                <text x="892" y="475">TiN: толщина слоя 0.005...0.010</text>
                <text x="892" y="490">на установке ИЭТ-2 "БУЛАТ".</text>
                <text x="876" y="504">3. H14,h14,±IT14/2</text>
                <text x="876" y="519">4. Маркировать: 2240-4488, шрифт 2.5,</text>
                <text x="892" y="534">ГОСТ2930-62</text>
                <text x="908" y="582">2240-4488</text>
                <text x="901" y="619">ФРЕЗА</text>
                <text x="902" y="658">Сталь Р6М5</text>
                <text x="1067" y="619">1:1</text>
              </g>

              <!-- title block -->
              <path d="M752.500 664V562H1095M752 589.500h343M752 635.500h343M872.500 562v102M784 562v102M827 562v102M854 562v102M1002.500 589v75M1030 589v37" stroke="#222" stroke-width="1.500"/>
              <path d="M765.500 562v46M752 571.500h120M752 580.500h120M752 599.500h120M752 608.500h120M752 618.500h120M752 627.500h120M752 645.500h120M752 654.500h120M1002 599.500h93M1002 626.500h93M1061.500 589v37M1039.500 626v9M1011.500 600v26M1021.500 600v26" stroke="#333"/>
              <g fill="#222" font-size="7">
                <text x="753" y="607">Изм</text><text x="767" y="607">Лист</text><text x="786" y="607">N докум.</text><text x="829" y="607">Подп.</text><text x="856" y="607">Дата</text>
                <text x="754" y="617">Разраб.</text><text x="754" y="626">Провер.</text><text x="754" y="634">Т.контр.</text><text x="754" y="644">Нач.лаб.</text><text x="754" y="654">Н.контр.</text><text x="754" y="662">Утв.</text>
                <text x="1008" y="598">Лит.</text><text x="1035" y="598">Масса</text><text x="1064" y="598">Масштаб</text>
                <text x="1004" y="634">Лист.</text><text x="1041" y="634">Листов</text>
                <text x="879" y="672">Копировал</text><text x="1008" y="672">Формат</text>
              </g>
              <!-- mouse pointer -->
              <path d="M552.500 235.500v11l3-3 2 4 2-1-2-4h4z" fill="#fff" stroke="#333"/>
            </g>
          </svg>
        </div>
      </div>

      <!-- variable editor -->
      <section role="dialog" aria-labelledby="dlg-title" class="absolute left-[566px] top-[153px] w-[325px] h-[187px] flex flex-col px-[5px] pb-1 bg-linear-to-b from-[#8fabd8] via-[#a9c2e8] via-15% to-[#b9d0f0] border border-b-2 border-r-2 border-[#3f6c8c] rounded-t-sm">
        <div class="h-[18px] shrink-0 flex items-center gap-1 pl-px">
          <svg class="size-[11px]" viewBox="0 0 11 11"><path d="M.5.5h10v10H.5z" fill="#f1f5fa" stroke="#5b6b82"/><path d="M2 2.500h7" stroke="#3f9a56" stroke-width="2"/><path d="M2 5.500h7M2 7.500h7M2 9.500h7" stroke="#46618a" stroke-dasharray="1 1"/></svg>
          <h2 id="dlg-title" class="flex-1">Редактор переменных</h2>
          <div class="flex gap-0.5">
            <button aria-label="Свернуть окно" class="w-5 h-[11px] grid place-items-center border border-[#7087b5] rounded-xs bg-[#b3c5e6]"><span class="w-2 h-1 border border-[#5f6f90] bg-white"></span></button>
            <button aria-label="Развернуть окно" class="w-5 h-[11px] grid place-items-center border border-[#7087b5] rounded-xs bg-[#b3c5e6]"><span class="size-[7px] p-px border border-[#5f6f90] bg-white"><span class="block size-[3px] border border-[#5f6f90]"></span></span></button>
            <button aria-label="Закрыть окно" class="w-[21px] h-[11px] grid place-items-center border border-[#7c2f2a] rounded-xs bg-linear-to-b from-[#d98b80] to-[#b93525]"><svg class="size-[7px]" viewBox="0 0 7 7"><path d="M1 1l5 5M6 1L1 6" stroke="#fff" stroke-width="1.800"/></svg></button>
          </div>
        </div>
        <div class="flex-1 flex flex-col bg-[#f5ecf6] border-l border-t border-[#5d7496]">
          <div class="flex-1 bg-white">
            <table class="w-full table-fixed border-collapse text-left">
              <thead>
                <tr class="h-4 bg-[#f6edf6] border-b border-[#b9b4c0]"><th class="w-[155px] pl-0.5 pb-0.5 font-normal border-r border-[#b9b4c0]">Комментарий</th><th class="w-[77px] pl-0.5 pb-0.5 font-normal border-r border-[#b9b4c0]">Имя</th><th class="pl-0.5 pb-0.5 font-normal">Значение</th></tr>
              </thead>
              <tbody>
                <tr class="h-[13px] border-b border-[#a8a6b0]"><td class="pl-px border-r border-[#8a8894]">Количество зубьев (8-80)</td><td class="pl-0.5 border-r border-[#8a8894]">z</td><td class="pl-px border-r border-[#8a8894]">75</td></tr>
                <tr class="h-[13px] border-b border-[#a8a6b0]"><td class="pl-px border-r border-[#8a8894]">Количество отверстий (1-8)</td><td class="pl-0.5 border-r border-[#8a8894]">otv</td><td class="pl-px border-r border-[#8a8894]">4</td></tr>
                <tr class="h-[13px] bg-[#3c96fb] text-white"><td class="pl-px border-r border-[#a9cdf8]">Ширина фрезы</td><td class="pl-0.5">b</td><td class="text-[#1d1a2a]"><input aria-label="Значение b" value="25" class="block w-full h-[13px] leading-2 px-px bg-white border border-dashed border-[#555] outline-none"></td></tr>
              </tbody>
            </table>
          </div>
          <div class="h-6 flex items-center justify-end gap-[5px] pr-2.5">
            <button class="w-[49px] h-[15px] leading-2 border-2 border-[#45b4e6] rounded-xs bg-linear-to-b from-[#f2f9fd] to-[#c8e2f0]">OK</button>
            <button class="w-[49px] h-[15px] leading-2 border border-[#8d8a9c] rounded-xs bg-linear-to-b from-[#fbf9fe] to-[#d5d2de]">Отменить</button>
          </div>
          <!-- resize grip -->
          <svg class="absolute right-1.5 bottom-1.5 size-1.5" viewBox="0 0 6 6"><path d="M4 0h1v1H4zM2 2h1v1H2zM4 2h1v1H4zM0 4h1v1H0zM2 4h1v1H2zM4 4h1v1H4z" fill="#b5b0bd"/></svg>
        </div>
      </section>
    </main>

    <!-- view toolbar -->
    <div class="w-6 shrink-0 flex flex-col items-center bg-linear-to-r from-[#f7f2fd] to-[#cfcde6] pb-px">
      <div class="h-[7px] pt-1"><div class="w-4 border-t border-dotted border-[#7f7d99]"></div></div>
      <div id="view-bar" class="flex flex-col items-center"></div>
      <button aria-label="Ещё" class="mt-auto w-full h-2 flex items-center justify-end pr-0.5 bg-[#c3c1dc]"><svg class="w-1.5 h-1.5" viewBox="0 0 6 6"><path d="M.5 1v4M2.500 1v4L5.500 3z" stroke="#000" stroke-width=".8"/></svg></button>
    </div>
  </div>

  <footer class="h-3.5 shrink-0 flex items-center pl-0.5 bg-[#f8e9f5] border-t border-[#c9bfd0]">
    <span class="flex-1">M: Редактировать параметры модели</span>
    <span class="h-full w-[70px] border-l border-[#e2d2e2]"></span><span class="h-full w-[69px] border-l border-[#e2d2e2]"></span>
  </footer>

  <!-- taskbar, only its upper edge is on screen -->
  <div id="taskbar" class="h-[5px] shrink-0 flex overflow-hidden bg-[#7384a2]"></div>

  <script>
    const iconBtn = (id, color) =>
      `<button class="w-5 h-5 grid place-items-center ${color || 'text-[#3c3450]'}" aria-label="${id}"><svg class="size-4"><use href="#${id}"/></svg></button>`;

    // '|' is a separator, 'v' a drop-down arrow
    document.getElementById('main-bar').innerHTML =
      'chev | new cube win | open save print v | undo v redo v | line circ ell v node | trim pen pen2 | txt hat | dim lead rough scr | frag frag2 aa link lib | brk | ham calc | spell'
        .split(' ').map(n => {
          if (n === '|') return '<span class="w-1 h-3.5 border-l border-[#a9a6bf]"></span>';
          if (n === 'v') return '<button class="w-2 h-5 grid place-items-center" aria-label="Список"><svg class="w-1 h-0.5" viewBox="0 0 4 2"><path d="M0 0h4L2 2z"/></svg></button>';
          return iconBtn(n);
        }).join('');

    document.getElementById('filter-bar').innerHTML = ['flt', 'flt2', 'fok', 'fno'].map(n =>
      `<button aria-label="${n}"><svg class="size-3"><use href="#${n}"/></svg></button>`).join('');

    document.getElementById('toggle-bar').innerHTML = ['t0', 't1', 't2', 't3', 't4', 't5', 't6', 't7', 't8'].map(n =>
      `<button class="w-[15px] h-3.5 grid place-items-center bg-[#b3d6f0] border border-[#4a86b8]" aria-label="${n}"><svg class="size-3"><use href="#${n}"/></svg></button>`).join('');

    const dark = 'text-[#3a2430]', dim = 'text-[#a3a4b2]', blue = 'text-[#34345c]';
    document.getElementById('view-bar').innerHTML = [
      ['r0'], ['r1'], ['r2'], 0, ['z0'], ['z1'], ['z2'], 0, ['z3'], ['z4'], ['z5'], 0,
      ['e0', dark], ['e1', dark], ['e2', dim], ['eye', dark], ['e4', dim], ['e5', dim], 0,
      ['stack'], 0, ['c0'], ['c1'], 0, ['pl'], 0,
      ['w0', dim], ['w1', dim], ['w2', dim], ['wire', dim], ['w4', dim], ['w5', dim], 0,
      ['wy', blue], ['tri'], ['pg']
    ].map(i => i ? iconBtn(i[0], i[1]) : '<span class="h-1 w-4 pt-px"><span class="block border-t border-[#b9b4c8]"></span></span>').join('');

    // rulers: a tick every 2 mm, a label every 20 mm
    const k = 1.854;
    let h = '', v = '';
    for (let mm = -80; mm <= 494; mm += 2) {
      const x = Math.round(150 + mm * k) + .5, top = mm % 20 === 0 ? 2 : mm % 10 === 0 ? 6 : 8;
      h += `<path d="M${x} ${top}V10" stroke="#77757f"/>`;
      if (mm % 20 === 0) h += `<text x="${x + 1}" y="6" font-size="6" fill="#333">${mm}</text>`;
    }
    for (let mm = 0; mm <= 302; mm += 2) {
      const y = Math.round(562 - mm * k) + .5, left = mm % 20 === 0 ? 2 : mm % 10 === 0 ? 6 : 8;
      v += `<path d="M${left} ${y}H10" stroke="#77757f"/>`;
      if (mm % 20 === 0 && mm < 300) v += `<text transform="translate(6 ${y - 1}) rotate(-90)" font-size="6" fill="#333">${mm}</text>`;
    }
    document.getElementById('h-ruler').innerHTML = h;
    document.getElementById('v-ruler').innerHTML = v;

    // sixteen teeth, 6 degrees each, then the plain rim
    const pt = (r, a) => {
      const t = a * Math.PI / 180;
      return (549 - r * Math.sin(t)).toFixed(1) + ' ' + (359 - r * Math.cos(t)).toFixed(1);
    };
    let d = 'M' + pt(157, 0);
    for (let i = 0; i < 16; i++) {
      const a = i * 6;
      d += `L${pt(149.5, a + 3.9)}Q${pt(146, a + 5.6)} ${pt(150.5, a + 5.9)}L${pt(157, a + 6)}`;
    }
    document.getElementById('teeth').setAttribute('d', d + 'A157 157 0 1 0 549 202');

    document.getElementById('taskbar').innerHTML = [
      [40, ''], [97, '#e8cf5a'], [97, '#e8cf5a'], [96, '#e8cf5a'], [44, ''], [96, '#e0b93c'], [96, '#e0b93c'],
      [70, '#d04a3c'], [93, '#6a9bd0'], [94, '#c9d4e6'], [43, '#c9402c'], [96, '#3f9a4f'], [97, '#8a93a8'], [96, '#3f86c8'], [110, ''], [15, '']
    ].map(([w, c]) =>
      `<span class="flex h-full pl-4 border-l border-[#46536e] ${c ? 'bg-linear-to-r from-[#dfe4ee] to-[#a9b3c8]' : 'bg-[#7384a2]'}" style="flex:${w}"><span class="w-4 h-2 mt-0.5 rounded-t-full" style="background:${c}"></span></span>`).join('');

    // caret at the end of the edited value
    const edit = document.querySelector('table input');
    edit.focus();
    edit.setSelectionRange(2, 2);
  </script>
</body>
</html>
